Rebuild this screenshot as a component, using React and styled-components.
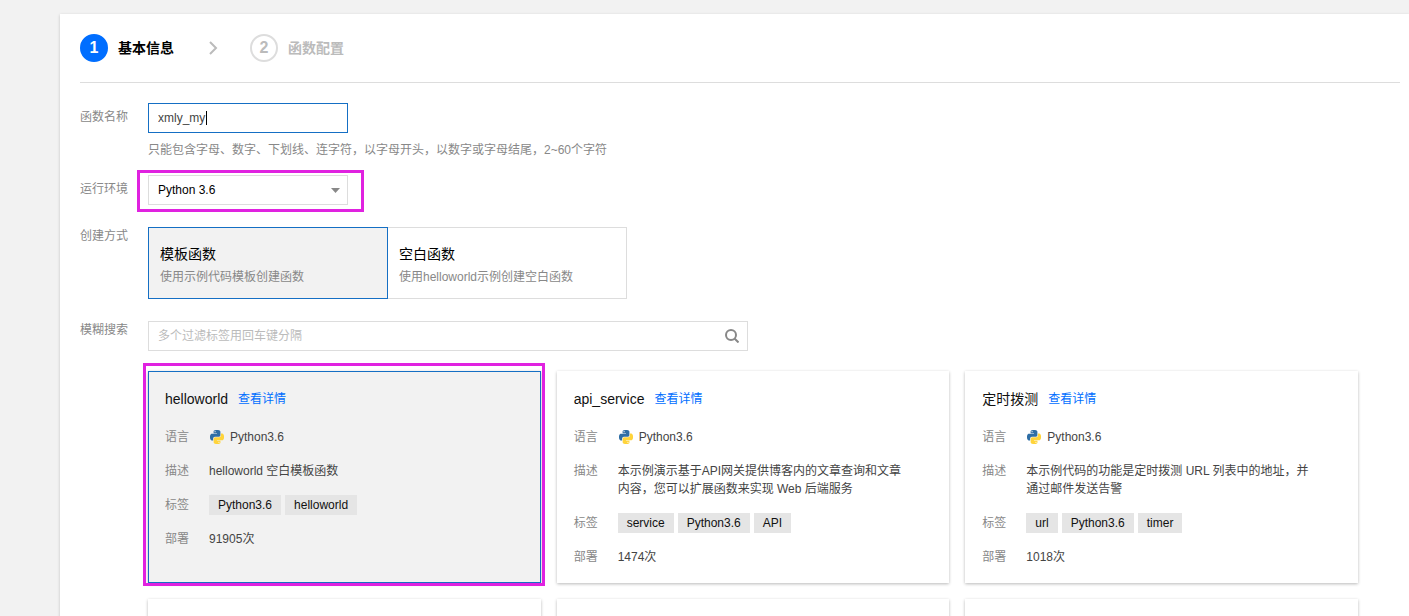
import React, { useState } from "react";
import styled, { createGlobalStyle } from "styled-components";

const GlobalStyle = createGlobalStyle`
  * {
    box-sizing: border-box;
  }
  body {
    margin: 0;
    background-color: #f2f2f2;
    color: #444;
    font-family: "Liberation Sans", "Noto Sans CJK SC", sans-serif;
    font-size: 12px;
    line-height: 18px;
  }
  input, select, button {
    margin: 0;
    font: inherit;
  }
`;

const Page = styled.div`
  height: 100vh;
  padding: 14px 0 0 60px;
  overflow: hidden;
`;

const Panel = styled.main`
  min-height: 100%;
  padding: 20px 9px 20px 20px;
  background-color: white;
  box-shadow: 0 1px 3px rgba(0, 0, 0, 0.2);
`;

const Steps = styled.ol`
  display: flex;
  align-items: center;
  margin: 0 0 20px;
  padding: 0 0 20px;
  border-bottom: 1px solid #ddd;
  list-style: none;
`;

const Step = styled.li`
  display: flex;
  align-items: center;
  gap: 10px;
  color: ${(props) => (props.$active ? "#000" : "#bbb")};
  font-size: 14px;
  font-weight: 700;
`;

const StepNumber = styled.span`
  width: 28px;
  height: 28px;
  border: 2px solid ${(props) => (props.$active ? "#006eff" : "#ddd")};
  border-radius: 50%;
  background-color: ${(props) => (props.$active ? "#006eff" : "#fff")};
  color: ${(props) => (props.$active ? "#fff" : "#bbb")};
  font-size: 16px;
  line-height: 24px;
  text-align: center;
`;

const StepArrow = styled.svg`
  width: 10px;
  height: 14px;
  margin: 0 32px 0 34px;
  fill: none;
  stroke: #bbb;
  stroke-width: 2;
`;

const Form = styled.form`
  display: flex;
  flex-direction: column;
  gap: 22px;
  padding-right: 42px;
`;

const Row = styled.div`
  display: flex;
`;

const Label = styled.label`
  flex: none;
  width: 68px;
  padding-top: ${(props) => (props.$inset ? "5px" : "0")};
  color: #888;
`;

const Field = styled.div`
  flex: 1;
  min-width: 0;
`;

const NameBox = styled.div`
  position: relative;
  width: 200px;
`;

const NameInput = styled.input`
  display: block;
  width: 100%;
  height: 30px;
  padding: 0 9px;
  border: 1px solid #156fc4;
  border-radius: 0;
  outline: none;
  color: #444;
`;

const Caret = styled.span`
  position: absolute;
  top: 8px;
  left: 58px;
  width: 1px;
  height: 14px;
  background-color: #000;
`;

const Hint = styled.p`
  margin: 8px 0 -6px;
  color: #888;
`;

const SelectBox = styled.div`
  position: relative;
  width: 200px;
`;

const Select = styled.select`
  display: block;
  width: 100%;
  height: 30px;
  padding: 0 9px;
  border: 1px solid #ddd;
  border-radius: 0;
  background-color: white;
  color: #000;
  appearance: none;
`;

const SelectArrow = styled.svg`
  position: absolute;
  top: 13px;
  right: 8px;
  width: 9px;
  height: 5px;
  fill: #888;
  pointer-events: none;
`;

const Highlight = styled.span`
  position: absolute;
  inset: ${(props) => props.$inset};
  border: 3px solid #e022e0;
  pointer-events: none;
`;

const Options = styled.div`
  display: flex;
`;

const Option = styled.label`
  position: relative;
  z-index: ${(props) => (props.$selected ? 1 : 0)};
  width: 240px;
  padding: 16px 11px 12px;
  border: 1px solid ${(props) => (props.$selected ? "#156fc4" : "#ddd")};
  background-color: ${(props) => (props.$selected ? "#f2f2f2" : "#fff")};
  cursor: pointer;
  & + & {
    margin-left: -1px;
  }
`;

const OptionRadio = styled.input`
  position: absolute;
  opacity: 0;
`;

const OptionTitle = styled.span`
  display: block;
  margin-bottom: 4px;
  color: #000;
  font-size: 14px;
  line-height: 20px;
`;

const OptionText = styled.span`
  display: block;
  color: #888;
`;

const SearchBox = styled.div`
  display: flex;
  max-width: 600px;
  height: 30px;
  margin-bottom: 20px;
  border: 1px solid #ddd;
`;

const SearchInput = styled.input`
  flex: 1;
  min-width: 0;
  padding: 0 9px;
  border: 0;
  outline: none;
  background: none;
  color: #444;
  &::placeholder {
    color: #bbb;
  }
`;

const SearchButton = styled.button`
  display: flex;
  align-items: center;
  padding: 0 8px;
  border: 0;
  background: none;
  cursor: pointer;
`;

const SearchIcon = styled.svg`
  width: 14px;
  height: 14px;
  fill: none;
  stroke: #888;
  stroke-width: 2;
`;

const Grid = styled.div`
  display: grid;
  grid-template-columns: repeat(3, 1fr);
  gap: 16px;
`;

const Card = styled.article`
  position: relative;
  min-height: 212px;
  padding: 17px 16px 15px;
  border: 1px solid ${(props) => (props.$selected ? "#156fc4" : "transparent")};
  background-color: ${(props) => (props.$selected ? "#f2f2f2" : "#fff")};
  box-shadow: 0 1px 3px rgba(0, 0, 0, 0.28);
`;

const CardHeader = styled.div`
  display: flex;
  align-items: center;
  gap: 10px;
  height: 20px;
  margin-bottom: 18px;
`;

const CardTitle = styled.h3`
  margin: 0;
  color: #111;
  font-size: 14px;
  font-weight: 400;
  line-height: 20px;
`;

const CardLink = styled.a`
  color: #006eff;
  text-decoration: none;
`;

const Details = styled.dl`
  display: grid;
  grid-template-columns: 24px 1fr;
  gap: 14px 20px;
  margin: 0;
`;

const Term = styled.dt`
  padding: 1px 0;
  color: #888;
`;

const Value = styled.dd`
  display: flex;
  align-items: center;
  gap: ${(props) => props.$gap || "0"};
  min-height: 20px;
  margin: 0;
  padding-right: 24px;
`;

const Description = styled.span`
  padding: 1px 0;
`;

const PythonIcon = styled.svg`
  width: 14px;
  height: 14px;
  margin-left: 1px;
`;

const Tag = styled.span`
  padding: 0 9px;
  background-color: #e5e5e5;
  color: #111;
  line-height: 20px;
`;

const MODES = [
  { id: "template", title: "模板函数", text: "使用示例代码模板创建函数" },
  { id: "blank", title: "空白函数", text: "使用helloworld示例创建空白函数" },
];

const TEMPLATES = [
  {
    name: "helloworld",
    language: "Python3.6",
    description: "helloworld 空白模板函数",
    tags: ["Python3.6", "helloworld"],
    deploys: 91905,
    selected: true,
  },
  {
    name: "api_service",
    language: "Python3.6",
    description:
      "本示例演示基于API网关提供博客内的文章查询和文章内容，您可以扩展函数来实现 Web 后端服务",
    tags: ["service", "Python3.6", "API"],
    deploys: 1474,
  },
  {
    name: "定时拨测",
    language: "Python3.6",
    description: "本示例代码的功能是定时拨测 URL 列表中的地址，并通过邮件发送告警",
    tags: ["url", "Python3.6", "timer"],
    deploys: 1018,
  },
];

const Python = () => (
  <PythonIcon viewBox="0 0 24 24" aria-hidden="true">
    <path
      fill="#2f6ea5"
      d="M14.25.18l.9.2.73.26.59.3.45.32.34.34.25.34.16.33.1.3.04.26.02.2-.01.13V8.5l-.05.63-.13.55-.21.46-.26.38-.3.31-.33.25-.35.19-.35.14-.33.1-.3.07-.26.04-.21.02H8.77l-.69.05-.59.14-.5.22-.41.27-.33.32-.27.35-.2.36-.15.37-.1.35-.07.32-.04.27-.02.21v3.06H3.17l-.21-.03-.28-.07-.32-.12-.35-.18-.36-.26-.36-.36-.35-.46-.32-.59-.28-.73-.21-.88-.14-1.05-.05-1.23.06-1.22.16-1.04.24-.87.32-.71.36-.57.4-.44.42-.33.42-.24.4-.16.36-.1.32-.05.24-.01h.16l.06.01h8.16v-.83H6.18l-.01-2.75-.02-.37.05-.34.11-.31.17-.28.25-.26.31-.23.38-.2.44-.18.51-.15.58-.12.64-.1.71-.06.77-.04.84-.02 1.27.05zm-6.3 1.98l-.23.33-.08.41.08.41.23.34.33.22.41.09.41-.09.33-.22.23-.34.08-.41-.08-.41-.23-.33-.33-.22-.41-.09-.41.09z"
    />
    <path
      fill="#ffd43b"
      d="M21.1 6.11l.28.06.32.12.35.18.36.27.36.35.35.47.32.59.28.73.21.88.14 1.04.05 1.23-.06 1.23-.16 1.04-.24.86-.32.71-.36.57-.4.45-.42.33-.42.24-.4.16-.36.09-.32.05-.24.02-.16-.01h-8.22v.82h5.84l.01 2.76.02.36-.05.34-.11.31-.17.29-.25.25-.31.24-.38.2-.44.17-.51.15-.58.13-.64.09-.71.07-.77.04-.84.01-1.27-.04-1.07-.14-.9-.2-.73-.25-.59-.3-.45-.33-.34-.34-.25-.34-.16-.33-.1-.3-.04-.25-.02-.2.01-.13v-5.34l.05-.64.13-.54.21-.46.26-.38.3-.32.33-.24.35-.2.35-.14.33-.1.3-.06.26-.04.21-.02.13-.01h5.84l.69-.05.59-.14.5-.21.41-.28.33-.32.27-.35.2-.36.15-.36.1-.35.07-.32.04-.28.02-.21V6.07h2.09l.14.01zm-6.47 14.25l-.23.33-.08.41.08.41.23.33.33.23.41.08.41-.08.33-.23.23-.33.08-.41-.08-.41-.23-.33-.33-.23-.41-.08-.41.08z"
    />
  </PythonIcon>
);

const TemplateCard = ({
  name,
  language,
  description,
  tags,
  deploys,
  selected = false,
}) => (
  <Card $selected={selected}>
    <CardHeader>
      <CardTitle>{name}</CardTitle>
      <CardLink href="#detail">查看详情</CardLink>
    </CardHeader>
    <Details>
      <Term>语言</Term>
      <Value $gap="6px">
        <Python />
        {language}
      </Value>
      <Term>描述</Term>
      <Value>
        <Description>{description}</Description>
      </Value>
      <Term>标签</Term>
      <Value $gap="4px">
        {tags.map((tag) => (
          <Tag key={tag}>{tag}</Tag>
        ))}
      </Value>
      <Term>部署</Term>
      <Value>{deploys}次</Value>
    </Details>
    {selected && <Highlight $inset="-9px -5px -4px -6px" />}
  </Card>
);

const App = () => {
  const [name, setName] = useState("xmly_my");
  const [mode, setMode] = useState("template");

  return (
    <>
      <GlobalStyle />
      <Page>
        <Panel>
          <Steps>
            <Step $active>
              <StepNumber $active>1</StepNumber>
              基本信息
            </Step>
            <StepArrow as="li" aria-hidden="true">
              <svg width="10" height="14" viewBox="0 0 10 14">
                <path d="M2 1l6 6-6 6" />
              </svg>
            </StepArrow>
            <Step>
              <StepNumber>2</StepNumber>
              函数配置
            </Step>
          </Steps>
          <Form onSubmit={(event) => event.preventDefault()}>
            <Row>
              <Label htmlFor="name" $inset>
                函数名称
              </Label>
              <Field>
                <NameBox>
                  <NameInput
                    id="name"
                    value={name}
                    onChange={(event) => setName(event.target.value)}
                  />
                  {name === "xmly_my" && <Caret />}
                </NameBox>
                <Hint>
                  只能包含字母、数字、下划线、连字符，以字母开头，以数字或字母结尾，2~60个字符
                </Hint>
              </Field>
            </Row>
            <Row>
              <Label htmlFor="runtime" $inset>
                运行环境
              </Label>
              <SelectBox>
                <Select id="runtime" defaultValue="Python 3.6">
                  <option>Python 3.6</option>
                </Select>
                <SelectArrow viewBox="0 0 9 5" aria-hidden="true">
                  <path d="M0 0h9L4.5 5z" />
                </SelectArrow>
                <Highlight $inset="-5px -16px -7px -11px" />
              </SelectBox>
            </Row>
            <Row>
              <Label as="span">创建方式</Label>
              <Options role="radiogroup" aria-label="创建方式">
                {MODES.map(({ id, title, text }) => (
                  <Option key={id} $selected={mode === id}>
                    <OptionRadio
                      type="radio"
                      name="mode"
                      checked={mode === id}
                      onChange={() => setMode(id)}
                    />
                    <OptionTitle>{title}</OptionTitle>
                    <OptionText>{text}</OptionText>
                  </Option>
                ))}
              </Options>
            </Row>
            <Row>
              <Label htmlFor="search">模糊搜索</Label>
              <Field>
                <SearchBox>
                  <SearchInput
                    id="search"
                    placeholder="多个过滤标签用回车键分隔"
                  />
                  <SearchButton type="button" aria-label="搜索">
                    <SearchIcon viewBox="0 0 14 14" aria-hidden="true">
                      <circle cx="6" cy="6" r="5" />
                      <path d="M9.5 9.5l4 4" />
                    </SearchIcon>
                  </SearchButton>
                </SearchBox>
                <Grid>
                  {TEMPLATES.map((template) => (
                    <TemplateCard key={template.name} {...template} />
                  ))}
                  <Card />
                  <Card />
                  <Card />
                </Grid>
              </Field>
            </Row>
          </Form>
        </Panel>
      </Page>
    </>
  );
};

export default App;
